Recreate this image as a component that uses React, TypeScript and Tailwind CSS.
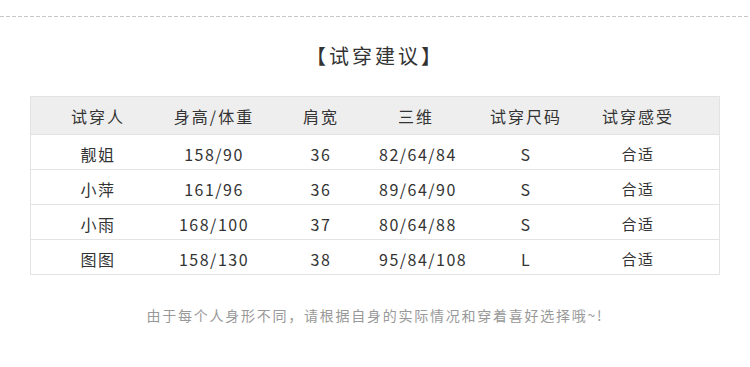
const rows = [
  { name: "靓姐", hw: "158/90", shoulder: "36", bwh: "82/64/84", size: "S", feel: "合适" },
  { name: "小萍", hw: "161/96", shoulder: "36", bwh: "89/64/90", size: "S", feel: "合适" },
  { name: "小雨", hw: "168/100", shoulder: "37", bwh: "80/64/88", size: "S", feel: "合适" },
  { name: "图图", hw: "158/130", shoulder: "38", bwh: "95/84/108", size: "L", feel: "合适" },
]

const heads = ["试穿人", "身高/体重", "肩宽", "三维", "试穿尺码", "试穿感受"]

const grid = "grid grid-cols-[134px_98px_116px_74px_146px_122px]"

export default function App() {
  return (
    <div className="w-[750px] h-[367px] bg-white font-['Noto_Sans_CJK_SC',sans-serif] text-[#333]">
      <div className="pt-4">
        <div className="h-px bg-[repeating-linear-gradient(90deg,#c8c8c8_0_4px,transparent_4px_6px)]" />
      </div>

      <h2 className="mt-[25px] text-center text-[20px] leading-[28px] tracking-[3px] text-[#333]">
        【试穿建议】
      </h2>

      <div className="mx-[30px] mt-[26px] w-[690px] border border-[#e3e3e3]">
        <div className={`${grid} h-[37px] items-center bg-[#eeeeee] text-[16px] tracking-[2px]`}>
          {heads.map((h, i) => (
            <div key={h} className={i === 5 ? "text-center pr-[44px]" : "text-center"}>{h}</div>
          ))}
        </div>
        {rows.map((r) => (
          <div key={r.name} className={`${grid} h-[35px] items-center pt-[4px] border-t border-[#e3e3e3] text-[16px] tracking-[1.5px]`}>
            <div className="text-center">{r.name}</div>
            <div className="text-center">{r.hw}</div>
            <div className="text-center">{r.shoulder}</div>
            <div className="text-center">{r.bwh}</div>
            <div className="text-center">{r.size}</div>
            <div className="text-center text-[15px] pr-[44px]">{r.feel}</div>
          </div>
        ))}
      </div>

      <p className="mt-[30px] text-center text-[14px] tracking-[1.75px] text-[#999]">
        由于每个人身形不同，请根据自身的实际情况和穿着喜好选择哦~!
      </p>
    </div>
  )
}
